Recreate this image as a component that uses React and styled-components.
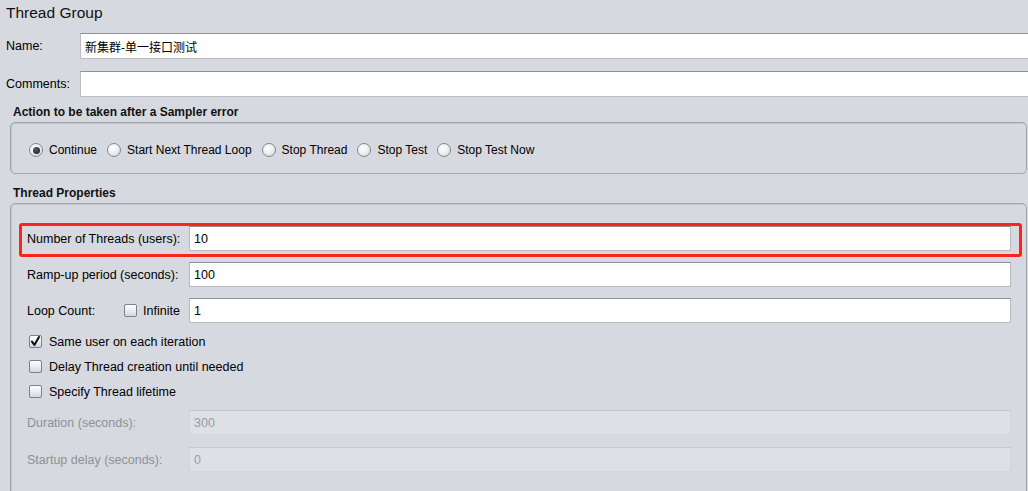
import React from 'react';
import styled, { createGlobalStyle } from 'styled-components';

const GlobalStyle = createGlobalStyle`
  html, body {
    margin: 0;
    padding: 0;
    background: #d6d9df;
  }
  body {
    font-family: "Liberation Sans", Arial, "Noto Sans CJK SC", sans-serif;
    font-size: 12.5px;
    color: #000;
  }
`

const Page = styled.div`
   width: 1028px;
   height: 491px;
   overflow: hidden;
   padding-left: 6px;
   box-sizing: border-box;
   background: #d6d9df;
`

const Title = styled.div`
   height: 26px;
   line-height: 26px;
   font-size: 15.5px;
   color: #111;
`

const TopRow = styled.div`
   display: flex;
   align-items: center;
   margin-top: ${p => p.$mt || 0}px;
   margin-right: -6px;
`

const TopLabel = styled.div`
   width: 74px;
   flex: none;
`

const TextField = styled.div`
   flex: 1;
   height: 26px;
   box-sizing: border-box;
   display: flex;
   align-items: center;
   padding-left: 4px;
   font-size: 12px;
   background: ${p => p.$disabled ? '#dee0e5' : '#fff'};
   color: ${p => p.$disabled ? '#9a9ca1' : '#000'};
   border: 1px solid ${p => p.$disabled ? '#d3d5da' : '#b9bbbf'};
   border-top-color: ${p => p.$disabled ? '#c6c8cd' : '#8f9195'};
   ${p => p.$short && 'height: 25px; font-size: 12.5px;'}
`

const Heading = styled.div`
   font-size: 12px;
   font-weight: bold;
   line-height: 18px;
   margin-top: ${p => p.$mt || 0}px;
   margin-left: 7px;
   color: #111;
`

const Panel = styled.div`
   margin: 1px 1px 0 4px;
   border: 1px solid #a2a5aa;
   border-radius: 5px;
   box-shadow: inset 1px 1px 0 #c3c6cb;
`

const RadioPanel = styled(Panel)`
   padding: 20px 0 16px 18px;
   display: flex;
   align-items: center;
   gap: 10px;
   height: 14px;
   font-size: 12px;
`

const Option = styled.label`
   display: inline-flex;
   align-items: center;
   gap: 6px;
   white-space: nowrap;
`

const RadioDot = styled.span`
   width: 14px;
   height: 14px;
   box-sizing: border-box;
   border-radius: 50%;
   border: 1px solid #85888d;
   background: radial-gradient(circle at 40% 35%, #ffffff 0%, #eef0f2 45%, #c9ccd1 100%);
   display: inline-flex;
   align-items: center;
   justify-content: center;

   &::after {
      content: '';
      width: 7px;
      height: 7px;
      border-radius: 50%;
      background: radial-gradient(circle at 40% 35%, #5a5d62, #151618);
      display: ${p => p.$on ? 'block' : 'none'};
   }
`

const PropsPanel = styled(Panel)`
   padding: 22px 15px 40px 16px;
   display: flex;
   flex-direction: column;
`

const FieldRow = styled.div`
   position: relative;
   display: flex;
   align-items: center;
   margin-top: ${p => p.$mt || 0}px;
   color: ${p => p.$disabled ? '#8e9196' : '#000'};

   ${p => p.$marked && `
     &::after {
        content: '';
        position: absolute;
        top: -3px;
        bottom: -6px;
        left: -8px;
        right: -11px;
        border: 3px solid #ff2418;
        border-radius: 3px;
        pointer-events: none;
     }
   `}
`

const FieldLabel = styled.div`
   width: 162px;
   flex: none;
   display: flex;
   align-items: center;
`

const LoopText = styled.span`
   width: 97px;
`

const CheckRow = styled.label`
   display: flex;
   align-items: center;
   gap: 7px;
   height: 25px;
   margin-left: 2px;
   margin-top: ${p => p.$mt || 0}px;
`

const Box = styled.span`
   width: 13px;
   height: 13px;
   box-sizing: border-box;
   flex: none;
   border: 1px solid #7d8085;
   border-radius: 2px;
   background: linear-gradient(#ffffff, #e9ebee 55%, #d3d6da);
   display: inline-flex;
   align-items: center;
   justify-content: center;
`

const Check = () => (
   <svg width="11" height="11" viewBox="0 0 11 11">
      <path d="M2 5.6 L4.4 9 L9 1" fill="none" stroke="#0c0c0c" strokeWidth="2" strokeLinecap="round" strokeLinejoin="round" />
   </svg>
)

const CheckBox = ({ on }) => <Box>{on && <Check />}</Box>

const radios = ['Continue', 'Start Next Thread Loop', 'Stop Thread', 'Stop Test', 'Stop Test Now']

export default function App() {
    return (
        <Page>
            <GlobalStyle />
            <Title>Thread Group</Title>
            <TopRow $mt={7}>
                <TopLabel>Name:</TopLabel>
                <TextField>新集群-单一接口测试</TextField>
            </TopRow>
            <TopRow $mt={12}>
                <TopLabel>Comments:</TopLabel>
                <TextField />
            </TopRow>

            <Heading $mt={6}>Action to be taken after a Sampler error</Heading>
            <RadioPanel>
                {radios.map((r, i) => (
                    <Option key={r}>
                        <RadioDot $on={i === 0} />
                        {r}
                    </Option>
                ))}
            </RadioPanel>

            <Heading $mt={10}>Thread Properties</Heading>
            <PropsPanel>
                <FieldRow $marked>
                    <FieldLabel>Number of Threads (users):</FieldLabel>
                    <TextField $short>10</TextField>
                </FieldRow>
                <FieldRow $mt={11}>
                    <FieldLabel>Ramp-up period (seconds):</FieldLabel>
                    <TextField $short>100</TextField>
                </FieldRow>
                <FieldRow $mt={11}>
                    <FieldLabel>
                        <LoopText>Loop Count:</LoopText>
                        <Option>
                            <CheckBox />
                            Infinite
                        </Option>
                    </FieldLabel>
                    <TextField $short>1</TextField>
                </FieldRow>

                <CheckRow $mt={6}>
                    <CheckBox on />
                    Same user on each iteration
                </CheckRow>
                <CheckRow>
                    <CheckBox />
                    Delay Thread creation until needed
                </CheckRow>
                <CheckRow>
                    <CheckBox />
                    Specify Thread lifetime
                </CheckRow>

                <FieldRow $mt={6} $disabled>
                    <FieldLabel>Duration (seconds):</FieldLabel>
                    <TextField $short $disabled>300</TextField>
                </FieldRow>
                <FieldRow $mt={12} $disabled>
                    <FieldLabel>Startup delay (seconds):</FieldLabel>
                    <TextField $short $disabled>0</TextField>
                </FieldRow>
            </PropsPanel>
        </Page>
    )
}
